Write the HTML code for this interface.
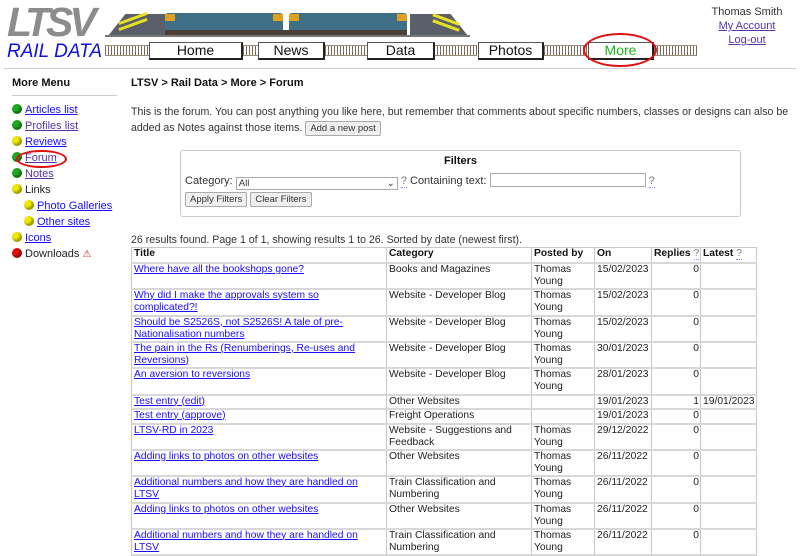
<!DOCTYPE html>
<html><head><meta charset="utf-8"><style>
body{margin:0;width:800px;height:543px;overflow:hidden;background:#fff;font-family:"Liberation Sans",Arial,sans-serif;font-size:11px;color:#222;position:relative}
a{color:#1a0dff;text-decoration:underline}
.abs{position:absolute}
.btn{position:absolute;top:42px;height:15px;background:#fff;border:1px solid #555;border-right:2px solid #222;border-bottom:2px solid #222;font-size:14px;text-align:center;line-height:15px;color:#111}
.rail{position:absolute;top:45px;height:9px;background:repeating-linear-gradient(90deg,#7a6a5a 0 1px,#fff 1px 3px);border-top:1px solid #9a8a7a;border-bottom:1px solid #9a8a7a}
.menu div{position:absolute;left:12px;font-size:11px}
.dot{display:inline-block;width:10px;height:10px;border-radius:50%;vertical-align:-1px;margin-right:3px;box-shadow:inset -2px -2px 2px rgba(0,0,0,.35)}
.g{background:#1ea81e}.y{background:#f0e800}.r{background:#e01010}
table{position:absolute;left:131px;top:247px;border-collapse:collapse;table-layout:fixed;width:625px}
td,th{border:1px solid #c8c8c8;padding:0 1px 0 2px;vertical-align:top;line-height:12px;font-size:10.3px;text-align:left;overflow:hidden;white-space:normal}
th{font-weight:bold;color:#111;white-space:nowrap}
tr{border-bottom:2px solid #d8d8d8}
.n{text-align:right}
.q{color:#777;border-bottom:1px dotted #88f;font-weight:normal}
.b{border:1px solid #aaa;background:#efefef;border-radius:2px;font-size:9.5px;padding:1px 4px;color:#333}
</style></head><body>
<div class="abs" style="left:7px;top:2px;font-size:41px;font-weight:900;font-style:italic;color:#8c8c8c;letter-spacing:-4px;line-height:40px">LTSV</div>
<div class="abs" style="left:7px;top:41px;font-size:19px;font-style:italic;color:#1010e0;line-height:22px">RAIL DATA</div>
<div class="abs" style="left:108px;top:14px;width:58px;height:22px;background:#5a5f6a;clip-path:polygon(30% 0,100% 0,100% 100%,0 100%)"></div>
<div class="abs" style="left:118px;top:17px;width:30px;height:3px;background:#e8e020;transform:rotate(-20deg)"></div>
<div class="abs" style="left:118px;top:23px;width:30px;height:3px;background:#e8e020;transform:rotate(-20deg)"></div>
<div class="abs" style="left:165px;top:13px;width:118px;height:19px;background:#3f6f84;border-radius:3px 3px 0 0"></div>
<div class="abs" style="left:289px;top:13px;width:118px;height:19px;background:#3f6f84;border-radius:3px 3px 0 0"></div>
<div class="abs" style="left:165px;top:14px;width:10px;height:7px;background:#e0a020"></div>
<div class="abs" style="left:273px;top:14px;width:10px;height:7px;background:#e0a020"></div>
<div class="abs" style="left:289px;top:14px;width:10px;height:7px;background:#e0a020"></div>
<div class="abs" style="left:397px;top:14px;width:10px;height:7px;background:#e0a020"></div>
<div class="abs" style="left:165px;top:30px;width:242px;height:6px;background:#4a4038"></div>
<div class="abs" style="left:410px;top:14px;width:58px;height:22px;background:#5a5f6a;clip-path:polygon(0 0,70% 0,100% 100%,0 100%)"></div>
<div class="abs" style="left:432px;top:18px;width:28px;height:3px;background:#e8e020;transform:rotate(20deg)"></div>
<div class="abs" style="left:432px;top:24px;width:28px;height:3px;background:#e8e020;transform:rotate(20deg)"></div>
<div class="abs" style="left:105px;top:35px;width:365px;height:2px;background:#777"></div>
<div class="rail" style="left:105px;width:44px"></div>
<div class="rail" style="left:243px;width:15px"></div>
<div class="rail" style="left:325px;width:42px"></div>
<div class="rail" style="left:434px;width:43px"></div>
<div class="rail" style="left:544px;width:43px"></div>
<div class="rail" style="left:654px;width:43px"></div>
<div class="btn" style="left:149px;width:91px">Home</div>
<div class="btn" style="left:258px;width:64px">News</div>
<div class="btn" style="left:367px;width:65px">Data</div>
<div class="btn" style="left:478px;width:63px">Photos</div>
<div class="btn" style="left:588px;width:63px;color:#18b818">More</div>
<div class="abs" style="left:583px;top:33px;width:74px;height:34px;border:2px solid #e01010;border-radius:50%;box-sizing:border-box"></div>
<div class="abs" style="left:700px;top:5px;width:94px;text-align:center;line-height:14px;font-size:11px;color:#333">Thomas Smith<br><a style="color:#5533aa">My Account</a><br><a style="color:#5533aa">Log-out</a></div>
<div class="abs" style="left:4px;top:68px;width:792px;height:1px;background:#ccc"></div>
<div class="abs" style="left:12px;top:77px;font-weight:bold;font-size:11px;color:#111">More Menu</div>
<div class="abs" style="left:12px;top:95px;width:105px;height:1px;background:#ccc"></div>
<div class="menu">
<div style="top:104px"><span class="dot g"></span><a>Articles list</a></div>
<div style="top:120px"><span class="dot g"></span><a style="color:#5533aa">Profiles list</a></div>
<div style="top:136px"><span class="dot y"></span><a>Reviews</a></div>
<div style="top:152px"><span class="dot g"></span><a style="color:#5533aa">Forum</a></div>
<div style="top:168px"><span class="dot g"></span><a style="color:#5533aa">Notes</a></div>
<div style="top:184px"><span class="dot y"></span>Links</div>
<div style="top:200px;left:24px"><span class="dot y"></span><a>Photo Galleries</a></div>
<div style="top:216px;left:24px"><span class="dot y"></span><a>Other sites</a></div>
<div style="top:232px"><span class="dot y"></span><a>Icons</a></div>
<div style="top:248px"><span class="dot r"></span>Downloads <span style="color:#d02020;font-size:10px">⚠</span></div>
</div>
<div class="abs" style="left:16px;top:150px;width:51px;height:18px;border:2px solid #e01010;border-radius:50%;box-sizing:border-box"></div>
<div class="abs" style="left:131px;top:77px;font-weight:bold;color:#111">LTSV &gt; Rail Data &gt; More &gt; Forum</div>
<div class="abs" style="left:131px;top:104px;width:665px;line-height:16px;color:#333;font-size:10.6px">This is the forum. You can post anything you like here, but remember that comments about specific numbers, classes or designs can also be added as Notes against those items. <span class="b">Add a new post</span></div>
<div class="abs" style="left:180px;top:150px;width:559px;height:65px;border:1px solid #ccc;border-radius:3px">
<div style="text-align:center;font-weight:bold;margin-top:4px;color:#111">Filters</div>
<div style="position:absolute;left:4px;top:22px;color:#333;white-space:nowrap">Category: <span style="display:inline-block;width:158px;height:11px;border:1px solid #aaa;font-size:9.5px;line-height:11px;padding-left:2px;vertical-align:-2px">All<span style="float:right;margin-right:2px">⌄</span></span> <span class="q">?</span> Containing text: <span style="display:inline-block;width:154px;height:12px;border:1px solid #aaa;vertical-align:-3px"></span> <span class="q">?</span></div>
<div style="position:absolute;left:4px;top:42px"><span class="b">Apply Filters</span> <span class="b">Clear Filters</span></div>
</div>
<div class="abs" style="left:131px;top:234px;color:#333;font-size:10.6px">26 results found. Page 1 of 1, showing results 1 to 26. Sorted by date (newest first).</div>
<table>
<colgroup><col style="width:255px"><col style="width:145px"><col style="width:63px"><col style="width:57px"><col style="width:49px"><col style="width:56px"></colgroup>
<tr style="height:15px"><th>Title</th><th>Category</th><th>Posted by</th><th>On</th><th>Replies <span class="q">?</span></th><th>Latest <span class="q">?</span></th></tr>
<tr style="height:26px"><td><a>Where have all the bookshops gone?</a></td><td>Books and Magazines</td><td>Thomas Young</td><td>15/02/2023</td><td class="n">0</td><td></td></tr>
<tr style="height:27px"><td><a>Why did I make the approvals system so complicated?!</a></td><td>Website - Developer Blog</td><td>Thomas Young</td><td>15/02/2023</td><td class="n">0</td><td></td></tr>
<tr style="height:26px"><td><a>Should be S2526S, not S2526S! A tale of pre-Nationalisation numbers</a></td><td>Website - Developer Blog</td><td>Thomas Young</td><td>15/02/2023</td><td class="n">0</td><td></td></tr>
<tr style="height:26px"><td><a>The pain in the Rs (Renumberings, Re-uses and Reversions)</a></td><td>Website - Developer Blog</td><td>Thomas Young</td><td>30/01/2023</td><td class="n">0</td><td></td></tr>
<tr style="height:27px"><td><a>An aversion to reversions</a></td><td>Website - Developer Blog</td><td>Thomas Young</td><td>28/01/2023</td><td class="n">0</td><td></td></tr>
<tr style="height:14px"><td><a>Test entry (edit)</a></td><td>Other Websites</td><td></td><td>19/01/2023</td><td class="n">1</td><td>19/01/2023</td></tr>
<tr style="height:15px"><td><a>Test entry (approve)</a></td><td>Freight Operations</td><td></td><td>19/01/2023</td><td class="n">0</td><td></td></tr>
<tr style="height:26px"><td><a>LTSV-RD in 2023</a></td><td>Website - Suggestions and Feedback</td><td>Thomas Young</td><td>29/12/2022</td><td class="n">0</td><td></td></tr>
<tr style="height:26px"><td><a>Adding links to photos on other websites</a></td><td>Other Websites</td><td>Thomas Young</td><td>26/11/2022</td><td class="n">0</td><td></td></tr>
<tr style="height:27px"><td><a>Additional numbers and how they are handled on LTSV</a></td><td>Train Classification and Numbering</td><td>Thomas Young</td><td>26/11/2022</td><td class="n">0</td><td></td></tr>
<tr style="height:26px"><td><a>Adding links to photos on other websites</a></td><td>Other Websites</td><td>Thomas Young</td><td>26/11/2022</td><td class="n">0</td><td></td></tr>
<tr style="height:26px"><td><a>Additional numbers and how they are handled on LTSV</a></td><td>Train Classification and Numbering</td><td>Thomas Young</td><td>26/11/2022</td><td class="n">0</td><td></td></tr>
</table>
</body></html>
